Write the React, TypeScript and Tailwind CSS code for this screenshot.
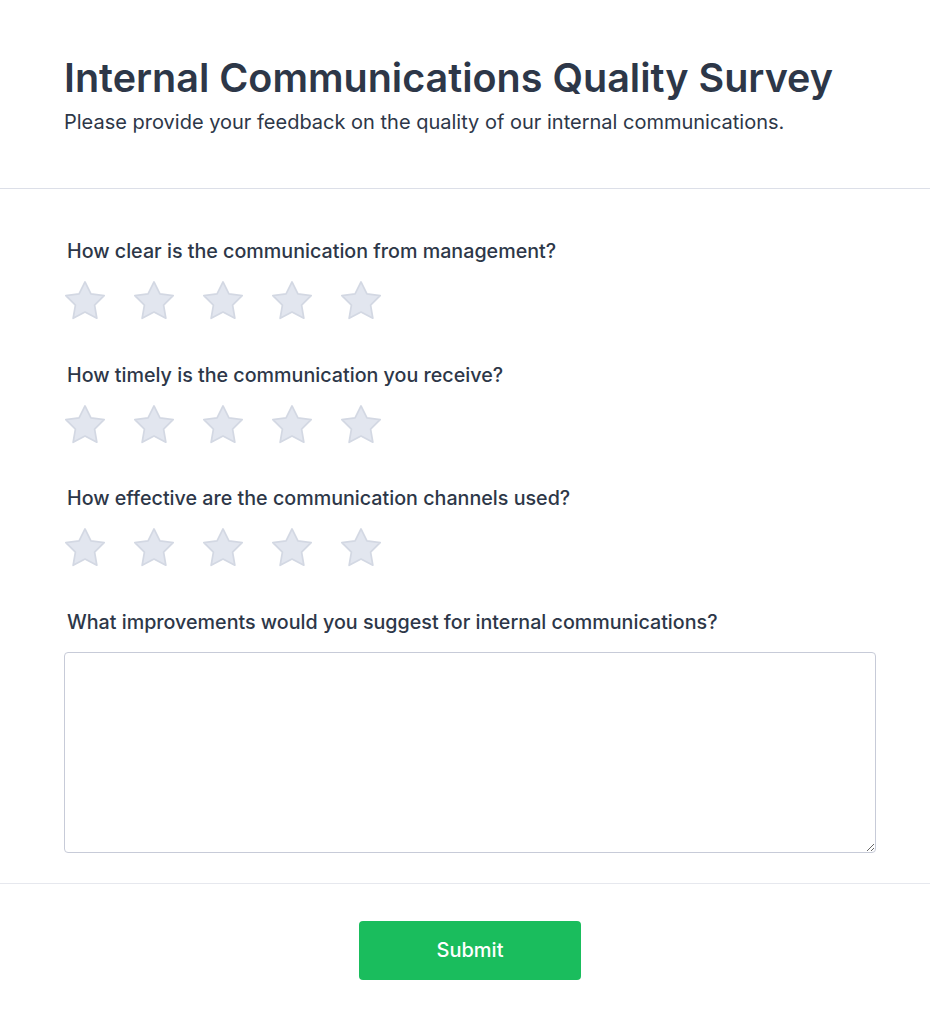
import React from "react";

const Star = () => (
  <svg viewBox="0 0 24 24" className="w-[46px] h-[46px] shrink-0" aria-hidden="true">
    <polygon
      points="12,2.6 15.09,8.76 22,9.77 17,14.64 18.18,21.52 12,18.27 5.82,21.52 7,14.64 2,9.77 8.91,8.76"
      fill="#e2e6ef"
      stroke="#d3d8e3"
      strokeWidth="0.9"
      strokeLinejoin="round"
    />
  </svg>
);

const questions = [
  "How clear is the communication from management?",
  "How timely is the communication you receive?",
  "How effective are the communication channels used?",
];

export default function App() {
  return (
    <div className="w-full overflow-hidden bg-white" style={{ fontFamily: "Inter, 'Noto Sans', sans-serif" }}>
      <div className="w-[940px] text-[#2d3748]">
        <div className="px-16 pt-[54px] pb-[52px] border-b border-[#dcdfe8]">
          <h1 className="text-[39.5px] leading-[48px] font-semibold">Internal Communications Quality Survey</h1>
          <p className="text-[20px] leading-[28px] mt-[6px]">Please provide your feedback on the quality of our internal communications.</p>
        </div>
        <div className="px-16 pt-[48px] pb-[30px]">
          {questions.map((q) => (
            <div key={q} className="mb-[37.5px]">
              <div className="text-[19.7px] leading-[28px] font-medium pl-[3px]">{q}</div>
              <div className="flex gap-[23px] mt-[12px] -ml-[2px]">
                {[0, 1, 2, 3, 4].map((i) => (
                  <Star key={i} />
                ))}
              </div>
            </div>
          ))}
          <div>
            <div className="text-[19.7px] leading-[28px] font-medium pl-[3px]">What improvements would you suggest for internal communications?</div>
            <textarea className="block w-full h-[201px] mt-[16px] border border-[#c7cbd8] rounded-[4px] resize-y" />
          </div>
        </div>
        <div className="border-t border-[#e6e8ee] pt-[37px] pb-[50px] flex justify-center">
          <button className="w-[222px] h-[59px] rounded-[4px] bg-[#1abd5d] text-white text-[20px] font-medium">Submit</button>
        </div>
      </div>
    </div>
  );
}
